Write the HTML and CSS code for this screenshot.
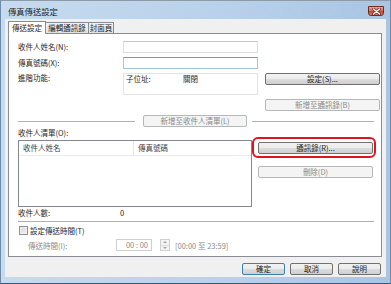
FILE: index.html
```html
<!DOCTYPE html>
<html lang="zh-Hant">
<head>
    <meta charset="UTF-8">
    <meta name="viewport" content="width=device-width, initial-scale=1.0">
    <title>傳真傳送設定</title>
    <link rel="stylesheet" href="styles.css">
</head>
<body>
    <div class="window">
        <div class="titlebar">
            <span class="title">傳真傳送設定</span>
            <span class="close">
                <svg width="9" height="7" viewBox="0 0 9 7">
                    <path d="M1.5 1 L7.5 6 M7.5 1 L1.5 6" stroke="#5a1a12" stroke-width="2.6" stroke-linecap="round"/>
                    <path d="M1.5 1 L7.5 6 M7.5 1 L1.5 6" stroke="#fff" stroke-width="1.4" stroke-linecap="round"/>
                </svg>
            </span>
        </div>
        <div class="client">
            <div class="tabs">
                <div class="tab active">傳送設定</div>
                <div class="tab">編輯通訊錄</div>
                <div class="tab">封面頁</div>
            </div>
            <div class="panel">
                <div class="form-grid">
                    <span class="label">收件人姓名(N):</span>
                    <span class="input"></span>
                    <span></span>

                    <span class="label">傳真號碼(X):</span>
                    <span class="input focused"></span>
                    <span></span>

                    <span class="label top">進階功能:</span>
                    <div class="info-box">
                        <span class="info-key">子位址:</span>
                        <span>關閉</span>
                    </div>
                    <div class="btn-cell"><button class="btn">設定(S)...</button></div>

                    <span></span>
                    <span></span>
                    <button class="btn" disabled>新增至通訊錄(B)</button>
                </div>

                <div class="sep-row">
                    <span class="line first"></span>
                    <button class="btn add-btn" disabled>新增至收件人清單(L)</button>
                    <span class="line"></span>
                </div>

                <div class="label list-label">收件人清單(O):</div>

                <div class="list-row">
                    <div class="listview">
                        <div class="list-head">
                            <span class="col-name">收件人姓名</span>
                            <span class="col-fax">傳真號碼</span>
                        </div>
                    </div>
                    <div class="list-buttons">
                        <div class="callout"><button class="btn">通訊錄(R)...</button></div>
                        <button class="btn del-btn" disabled>刪除(D)</button>
                    </div>
                </div>

                <div class="count-row">
                    <span class="count-label">收件人數:</span>
                    <span>0</span>
                </div>

                <div class="line full"></div>

                <div class="check-row">
                    <span class="checkbox"></span>
                    <span>設定傳送時間(T)</span>
                </div>

                <div class="time-row">
                    <span class="time-label">傳送時間(I):</span>
                    <span class="time-box">00 : 00</span>
                    <span class="spinner">
                        <span class="spin up"></span>
                        <span class="spin down"></span>
                    </span>
                    <span class="range">[00:00 至 23:59]</span>
                </div>
            </div>
            <div class="footer">
                <button class="btn default">確定</button>
                <button class="btn">取消</button>
                <button class="btn">說明</button>
            </div>
        </div>
    </div>
</body>
</html>
```
FILE: styles.css
```css
* {
    box-sizing: border-box;
}
html, body {
    margin: 0;
    padding: 0;
}
body {
    width: 391px;
    height: 284px;
    overflow: hidden;
    font-family: "Noto Sans CJK TC", "Noto Sans", sans-serif;
    font-size: 7.5px;
    color: #1e1e1e;
    background: #fff;
}
.window {
    width: 391px;
    height: 284px;
    display: flex;
    flex-direction: column;
    padding: 0 4px 6px 4px;
    border: 1px solid #6f8aa6;
    border-top-color: #8d9aa8;
    border-bottom-color: #2b5f7c;
    background: linear-gradient(to right, #c6dbef, #b8d0ea 60%, #a9c5e3);
}
.titlebar {
    height: 18px;
    display: flex;
    justify-content: space-between;
    align-items: flex-start;
    flex-shrink: 0;
}
.title {
    padding: 5px 0 0 3px;
    font-size: 8.3px;
    line-height: 10px;
    color: #1b1b1b;
}
.close {
    width: 16px;
    height: 10px;
    margin: 5px 2px 0 0;
    display: flex;
    align-items: center;
    justify-content: center;
    border: 1px solid #6d2d23;
    border-radius: 0 0 3px 3px;
    background: linear-gradient(#e6a394, #d4705f 45%, #c24530 55%, #d2826c);
}
.client {
    flex: 1;
    display: flex;
    flex-direction: column;
    padding: 3px 4px 0 3px;
    background: #f0f0f0;
}
.tabs {
    height: 11px;
    display: flex;
    align-items: flex-end;
    position: relative;
    z-index: 1;
}
.tab {
    height: 11px;
    line-height: 10px;
    text-align: center;
    border: 1px solid #898c95;
    border-bottom: none;
    background: linear-gradient(#f3f3f3, #e3e3e3);
    margin-left: -1px;
}
.tab:nth-child(2) {
    width: 44px;
}
.tab:nth-child(3) {
    width: 26px;
}
.tab.active {
    width: 38px;
    height: 13px;
    margin: 0 0 -1px 0;
    padding-top: 1px;
    background: #fff;
}
.panel {
    width: 374px;
    height: 224px;
    border: 1px solid #898c95;
    background: #fff;
    padding: 7px 7px 0 9px;
    display: flex;
    flex-direction: column;
}
.form-grid {
    display: grid;
    grid-template-columns: 98px 135px 115px;
    grid-template-rows: 12px 12px 22px 12px;
    column-gap: 7px;
    row-gap: 4px;
}
.label {
    line-height: 12px;
}
.label.top {
    line-height: 10px;
}
.input {
    border: 1px solid #dadde3;
    border-top-color: #c4c7cd;
    background: #fff;
}
.input.focused {
    border-color: #a4c6e3;
    border-top-color: #6d9cc6;
}
.info-box {
    display: flex;
    border: 1px solid #e3e3e3;
    padding: 0 2px;
    line-height: 10px;
}
.info-key {
    width: 57px;
}
.btn-cell {
    display: flex;
}
.btn {
    height: 12px;
    width: 100%;
    padding: 0;
    font-family: inherit;
    font-size: 7.5px;
    line-height: 10px;
    color: #1e1e1e;
    border: 1px solid #707070;
    border-radius: 2px;
    background: linear-gradient(#f2f2f2, #ebebeb 50%, #dddddd 50%, #cfcfcf);
}
.btn:disabled {
    color: #8a8a8a;
    border-color: #b5b8bb;
    background: #f4f4f4;
}
.btn.default {
    border-color: #3c7fb1;
}
.sep-row {
    display: flex;
    align-items: center;
    height: 12px;
    margin-top: 4px;
}
.line {
    flex: 1;
    height: 1px;
    background: #b0b0b0;
}
.line.first {
    flex: none;
    width: 117px;
    margin-right: 8px;
}
.add-btn {
    width: 104px;
    margin-right: 5px;
}
.line.full {
    flex: none;
    margin-top: 3px;
}
.list-label {
    margin-top: 1px;
    line-height: 10px;
}
.list-row {
    display: flex;
    gap: 6px;
    margin-top: 2px;
}
.listview {
    width: 234px;
    height: 67px;
    border: 1px solid #828790;
}
.list-head {
    display: flex;
    height: 15px;
    line-height: 14px;
    border-bottom: 1px solid #eaeaea;
    color: #3c3c3c;
}
.col-name {
    width: 115px;
    padding-left: 4px;
    border-right: 1px solid #e8e8e8;
}
.col-fax {
    padding-left: 4px;
}
.list-buttons {
    width: 115px;
    padding-top: 2px;
    display: flex;
    flex-direction: column;
}
.callout {
    margin: -5px -3px -4px -6px;
    padding: 3px 1px 2px 4px;
    border: 2px solid #e2141b;
    border-radius: 6px;
}
.del-btn {
    margin-top: 12px;
}
.count-row {
    display: flex;
    margin-top: 1px;
    line-height: 10px;
}
.count-label {
    width: 102px;
}
.check-row {
    display: flex;
    align-items: center;
    gap: 2px;
    height: 10px;
    margin-top: 3px;
}
.checkbox {
    width: 9px;
    height: 9px;
    margin-left: 1px;
    border: 1px solid #8e8f8f;
    background: linear-gradient(135deg, #d6d6d6, #f4f4f4);
    box-shadow: inset 0 0 0 1px #f0f0f0;
}
.time-row {
    display: flex;
    align-items: center;
    height: 12px;
    margin-top: 4px;
    color: #8a8a8a;
}
.time-label {
    width: 98px;
    padding-left: 10px;
}
.time-box {
    width: 36px;
    height: 12px;
    line-height: 10px;
    text-align: right;
    padding-right: 3px;
    border: 1px solid #cfcfcf;
    background: #fff;
}
.spinner {
    width: 10px;
    height: 12px;
    margin-left: 8px;
    display: flex;
    flex-direction: column;
    border: 1px solid #cfcfcf;
    background: #f4f4f4;
}
.spin {
    flex: 1;
    display: flex;
    align-items: center;
    justify-content: center;
}
.spin.up {
    border-bottom: 1px solid #dcdcdc;
}
.spin.up::after {
    content: "";
    border: 2px solid transparent;
    border-bottom: 2px solid #a0a0a0;
    border-top: none;
}
.spin.down::after {
    content: "";
    border: 2px solid transparent;
    border-top: 2px solid #a0a0a0;
    border-bottom: none;
}
.range {
    margin-left: 5px;
}
.footer {
    display: flex;
    justify-content: flex-end;
    gap: 5px;
    margin-top: 6px;
    margin-right: 1px;
}
.footer .btn {
    width: 43px;
}
```
